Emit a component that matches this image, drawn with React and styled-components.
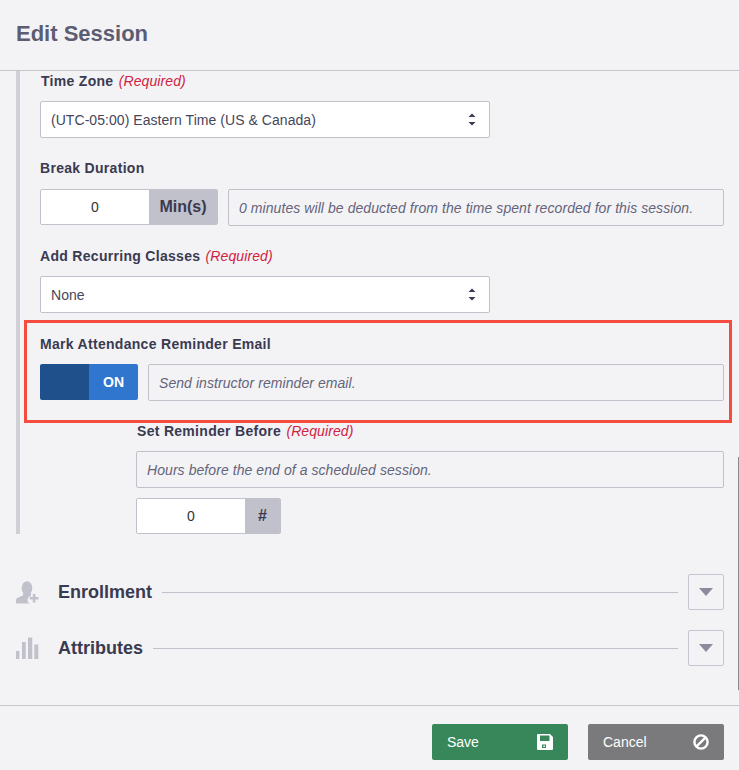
import React from "react";
import styled, { createGlobalStyle } from "styled-components";

const Global = createGlobalStyle`
  html, body {
    margin: 0;
    padding: 0;
    background: #f3f3f6;
  }
  * {
    box-sizing: border-box;
  }
`;

const Modal = styled.div`
  position: relative;
  width: 739px;
  height: 770px;
  display: flex;
  flex-direction: column;
  overflow: hidden;
  background: #f3f3f6;
  font-family: "Liberation Sans", Arial, sans-serif;
  color: #3a3a50;
`;

const Header = styled.header`
  height: 71px;
  flex: none;
  padding: 0 16px;
  display: flex;
  align-items: center;
  border-bottom: 1px solid #c6c6ce;
`;

const Title = styled.h1`
  margin: 0 0 3px;
  font-size: 22px;
  font-weight: bold;
  color: #5c5c72;
`;

const Body = styled.div`
  flex: 1;
  padding: 0 15px 0 16px;
`;

const Section = styled.section`
  border-left: 4px solid #cfcfd6;
  padding-left: 20px;
  height: 463px;
`;

const Field = styled.div`
  margin-bottom: ${(props) => props.$gap || 20}px;
  margin-left: ${(props) => props.$indent || 0}px;
`;

const Label = styled.label`
  display: block;
  height: 20px;
  line-height: 20px;
  margin-bottom: 10px;
  padding-left: ${(props) => props.$inset || 0}px;
  font-size: 14px;
  font-weight: bold;
  letter-spacing: 0.3px;
  color: #3a3a50;
`;

const Required = styled.em`
  font-weight: normal;
  letter-spacing: 0.1px;
  margin-left: 1px;
  color: #d0213f;
`;

const SelectBox = styled.div`
  width: 450px;
  height: 37px;
  padding: 0 13px 0 10px;
  display: flex;
  align-items: center;
  justify-content: space-between;
  background: #fff;
  border: 1px solid #c1c1cc;
  border-radius: 2px;
  font-size: 14px;
  letter-spacing: 0.05px;
  color: #46465a;
`;

const Row = styled.div`
  display: flex;
  gap: 10px;
  padding-top: ${(props) => props.$top || 0}px;
`;

const InputGroup = styled.div`
  flex: none;
  display: flex;
  width: ${(props) => props.$width}px;
  height: 36px;
  border: 1px solid #c1c1cc;
  border-radius: 2px;
  overflow: hidden;
`;

const NumberCell = styled.div`
  width: 108px;
  flex: none;
  background: #fff;
  display: flex;
  align-items: center;
  justify-content: center;
  font-size: 14px;
  color: #333;
`;

const Unit = styled.div`
  flex: 1;
  background: #c1c1cc;
  display: flex;
  align-items: center;
  justify-content: center;
  font-size: 16px;
  font-weight: bold;
  color: #3a3a50;
`;

const Help = styled.div`
  flex: 1;
  height: 37px;
  padding: 0 10px;
  display: flex;
  align-items: center;
  border: 1px solid #c1c1cc;
  border-radius: 2px;
  font-size: 14px;
  font-style: italic;
  letter-spacing: 0.07px;
  color: #64647a;
`;

const Toggle = styled.div`
  flex: none;
  width: 98px;
  height: 36px;
  display: flex;
  border-radius: 2px;
  overflow: hidden;
`;

const ToggleKnob = styled.div`
  width: 49px;
  background: #20508c;
`;

const ToggleLabel = styled.div`
  width: 49px;
  background: #3076cf;
  color: #fff;
  display: flex;
  align-items: center;
  justify-content: center;
  font-size: 14px;
  font-weight: bold;
`;

const Accordion = styled.div`
  display: flex;
  align-items: center;
  height: 36px;
  margin-top: ${(props) => props.$top}px;
`;

const AccordionIcon = styled.svg`
  width: 23px;
  height: 23px;
  flex: none;
  fill: #c1c1cc;
`;

const AccordionTitle = styled.h2`
  margin: 0 10px 0 19px;
  font-size: 18px;
  font-weight: bold;
  color: #3a3a50;
`;

const Rule = styled.div`
  flex: 1;
  height: 1px;
  background: #c1c1cc;
`;

const Expand = styled.button`
  flex: none;
  width: 36px;
  height: 36px;
  margin-left: 10px;
  padding: 0;
  display: flex;
  align-items: center;
  justify-content: center;
  background: transparent;
  border: 1px solid #c6c6d0;
  border-radius: 2px;
`;

const Caret = styled.span`
  width: 0;
  height: 0;
  border-left: 7px solid transparent;
  border-right: 7px solid transparent;
  border-top: 8px solid #8b8b9e;
`;

const Footer = styled.footer`
  height: 65px;
  flex: none;
  padding: 18px 15px 0 0;
  display: flex;
  justify-content: flex-end;
  gap: 20px;
  border-top: 1px solid #c6c6ce;
`;

const ActionButton = styled.button`
  width: 136px;
  height: 36px;
  padding: 0 15px;
  display: flex;
  align-items: center;
  justify-content: space-between;
  border: 0;
  border-radius: 2px;
  background: ${(props) => props.$color};
  color: #fff;
  font-family: inherit;
  font-size: 14px;
`;

const Highlight = styled.div`
  position: absolute;
  left: 24px;
  top: 320px;
  width: 708px;
  height: 103px;
  border: 3px solid #f44c3e;
  pointer-events: none;
`;

const ScrollThumb = styled.div`
  position: absolute;
  right: 0;
  top: 457px;
  width: 1px;
  height: 233px;
  background: #8a8a8a;
`;

function SelectArrows() {
  return (
    <svg width="8" height="13" viewBox="0 0 8 13" fill="#3a3a50">
      <path d="M4 0.500l3.500 3.500h-7zM4 12.500l-3.500-3.500h7z" />
    </svg>
  );
}

function Select({ value }) {
  return (
    <SelectBox>
      {value}
      <SelectArrows />
    </SelectBox>
  );
}

function SaveIcon() {
  return (
    <svg width="16" height="16" viewBox="0 0 16 16" fill="#fff">
      <path
        fillRule="evenodd"
        d="M1 0h12l3 3v12a1 1 0 0 1-1 1H1a1 1 0 0 1-1-1V1a1 1 0 0 1 1-1zM3 1.500v5.500h9.500V1.500zM5 10.500v3.500h4v-3.500z"
      />
      <path d="M6.300 11.500h1.600v1.500H6.300z" />
    </svg>
  );
}

function BanIcon() {
  return (
    <svg width="16" height="16" viewBox="0 0 16 16" fill="none" stroke="#fff" strokeWidth="2.400">
      <circle cx="8" cy="8" r="6.600" />
      <path d="M3.300 12.700L12.700 3.300" />
    </svg>
  );
}

export default function App() {
  return (
    <Modal>
      <Global />
      <Header>
        <Title>Edit Session</Title>
      </Header>
      <Body>
        <Section>
          <Field>
            <Label $inset={1}>Time Zone <Required>(Required)</Required></Label>
            <Select value="(UTC-05:00) Eastern Time (US & Canada)" />
          </Field>
          <Field>
            <Label>Break Duration</Label>
            <Row $top={1}>
              <InputGroup $width={178}>
                <NumberCell>0</NumberCell>
                <Unit>Min(s)</Unit>
              </InputGroup>
              <Help>0 minutes will be deducted from the time spent recorded for this session.</Help>
            </Row>
          </Field>
          <Field $gap={21}>
            <Label>Add Recurring Classes <Required>(Required)</Required></Label>
            <Select value="None" />
          </Field>
          <Field>
            <Label>Mark Attendance Reminder Email</Label>
            <Row>
              <Toggle>
                <ToggleKnob />
                <ToggleLabel>ON</ToggleLabel>
              </Toggle>
              <Help>Send instructor reminder email.</Help>
            </Row>
          </Field>
          <Field $indent={96}>
            <Label $inset={1}>Set Reminder Before <Required>(Required)</Required></Label>
            <Row>
              <Help>Hours before the end of a scheduled session.</Help>
            </Row>
            <Row $top={10}>
              <InputGroup $width={145}>
                <NumberCell>0</NumberCell>
                <Unit>#</Unit>
              </InputGroup>
            </Row>
          </Field>
        </Section>
        <Accordion $top={40}>
          <AccordionIcon viewBox="0 0 23 23">
            <ellipse cx="11" cy="7" rx="5.300" ry="6.800" />
            <path d="M0 22.500v-3.500c0-1.800 3.500-3.200 7-4.500v-3h8v3.500c-2 .3-3.500 2-3.500 4 0 1.400.7 2.700 2 3.500z" />
            <path d="M16.800 13h2.600v3h3.100v2.600h-3.100v3h-2.600v-3h-3v-2.600h3z" />
          </AccordionIcon>
          <AccordionTitle>Enrollment</AccordionTitle>
          <Rule />
          <Expand><Caret /></Expand>
        </Accordion>
        <Accordion $top={20}>
          <AccordionIcon viewBox="0 0 23 23">
            <path d="M0 14h3.400v8H0zM6 5h3.700v17H6zM12 .5h4.300V22H12zM18.300 7.500h4v14.500h-4z" />
          </AccordionIcon>
          <AccordionTitle>Attributes</AccordionTitle>
          <Rule />
          <Expand><Caret /></Expand>
        </Accordion>
      </Body>
      <Footer>
        <ActionButton $color="#38875a">Save <SaveIcon /></ActionButton>
        <ActionButton $color="#7a7a7c">Cancel <BanIcon /></ActionButton>
      </Footer>
      <Highlight />
      <ScrollThumb />
    </Modal>
  );
}
